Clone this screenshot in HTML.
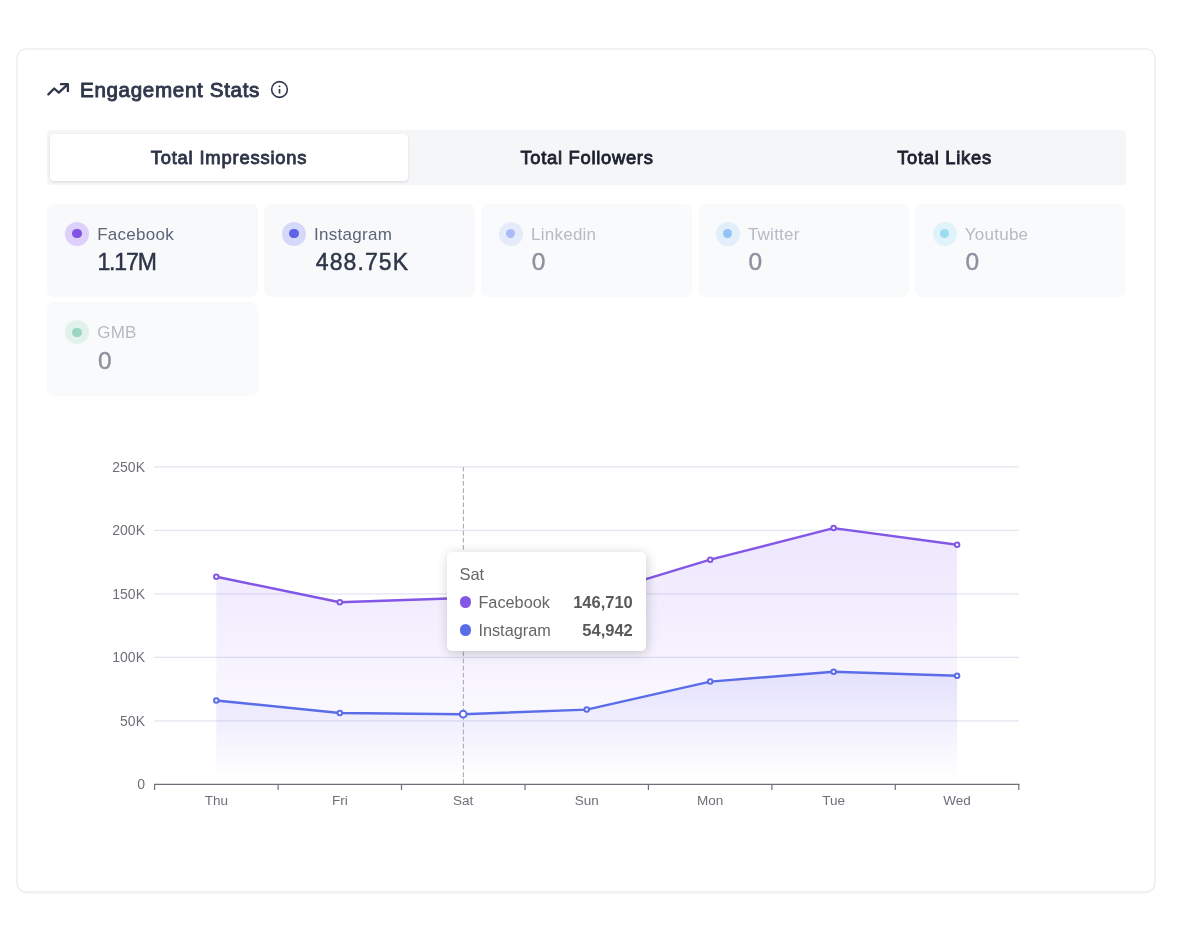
<!DOCTYPE html>
<html lang="en">
<head>
<meta charset="utf-8">
<title>Engagement Stats</title>
<style>
*{box-sizing:border-box;margin:0;padding:0}
html,body{width:1181px;height:945px;background:#fff;overflow:hidden}
body{font-family:"Liberation Sans",Arial,sans-serif;color:#2d3548;position:relative}
.hd{position:absolute;left:47px;top:78px;height:24px;display:flex;align-items:center}
.hd svg.tr{position:absolute;left:0;top:4px}
.hd h2{position:absolute;left:33px;top:-.4px;font-size:20.6px;line-height:24px;font-weight:400;-webkit-text-stroke:.9px #2f374b;color:#2f374b;white-space:nowrap;letter-spacing:.66px}
.hd svg.info{position:absolute;left:222.9px;top:1.75px}
.tabs{position:absolute;left:47px;top:130px;width:1079px;height:55px;background:#f5f6f8;border-radius:4px}
.tab{position:absolute;top:0;height:55px;line-height:56.6px;text-align:center;font-size:18.4px;font-weight:400;-webkit-text-stroke:.85px #1c2130;color:#1c2130;white-space:nowrap;letter-spacing:.7px}
.tab.act{left:3px;top:3.5px;width:358px;height:47.5px;line-height:48.6px;letter-spacing:.8px;-webkit-text-stroke:.85px #2d3548;background:#fff;border-radius:4px;box-shadow:0 1px 3px rgba(16,24,40,.1),0 1px 2px rgba(16,24,40,.04);color:#2d3548}
.st{position:absolute;width:211.4px;height:93.5px;background:#f8f9fb;border-radius:7px}
.st .dot{position:absolute;left:18px;top:18.2px;width:24px;height:24px;border-radius:50%}
.st .dot i{position:absolute;left:7.2px;top:7.2px;width:9.6px;height:9.6px;border-radius:50%}
.st .lb{position:absolute;left:50.3px;top:21px;font-size:17px;line-height:20px;color:#5d6576;white-space:nowrap;letter-spacing:.27px}
.st .vl{position:absolute;left:50.5px;top:44.8px;font-size:23px;line-height:28px;color:#2d3548;-webkit-text-stroke:.45px #2d3548;white-space:nowrap}
.st.off{background:#f9fafc}
.st.off .lb{color:#b5bac4;letter-spacing:.25px}
.st.off .vl{color:#8c929e;-webkit-text-stroke:.4px #8c929e;font-size:24.5px;left:51px}
.tip{position:absolute;left:446.8px;top:552.3px;width:199.4px;height:98.5px;background:#fff;border-radius:5px;box-shadow:1px 2px 12px rgba(0,0,0,.2);font-size:16.5px;color:#666}
.tip .t{position:absolute;left:12.6px;top:11.3px;line-height:20px}
.tip .r{position:absolute;left:13px;right:13.4px;height:20px;line-height:20px}
.tip .r b{position:absolute;right:0;top:0;color:#595959;font-weight:700}
.tip .r i{position:absolute;left:0;top:4.3px;width:11.6px;height:11.6px;border-radius:50%}
.tip .r span{position:absolute;left:18.6px;top:0;font-size:16.3px}
svg text{font-family:"Liberation Sans",Arial,sans-serif}
</style>
</head>
<body>
<div id="root" style="position:absolute;left:0;top:0;width:1181px;height:945px;will-change:transform">
<svg style="position:absolute;left:0;top:0" width="1181" height="945" viewBox="0 0 1181 945">
  <defs><filter id="sh" x="-2%" y="-2%" width="104%" height="104%"><feGaussianBlur stdDeviation="1.2"/></filter></defs>
  <rect x="17" y="49.8" width="1137.9" height="843.2" rx="9" fill="#101828" opacity=".07" filter="url(#sh)"/>
  <rect x="17" y="48.8" width="1137.9" height="843.2" rx="9" fill="#fff" stroke="#e9ebef" stroke-width="1.2"/>
</svg>

<div class="hd">
  <svg class="tr" width="24" height="16" viewBox="0 0 24 16" fill="none" stroke="#2f374b" stroke-width="2.3" stroke-linecap="round" stroke-linejoin="round"><path d="M1.4 12.4 L7.2 6.5 L11.8 10.6 L20.4 2.6"/><path d="M13.9 2.2 H20.9 V9.2"/></svg>
  <h2>Engagement Stats</h2>
  <svg class="info" width="19" height="19" viewBox="0 0 19 19" fill="none"><circle cx="9.5" cy="9.5" r="7.85" stroke="#2f374b" stroke-width="1.6"/><rect x="8.65" y="9" width="1.7" height="4.4" rx=".5" fill="#2f374b"/><circle cx="9.5" cy="6.35" r=".95" fill="#2f374b"/></svg>
</div>

<div class="tabs">
  <div class="tab act">Total Impressions</div>
  <div class="tab" style="left:361px;width:358px">Total Followers</div>
  <div class="tab" style="left:719px;width:357px">Total Likes</div>
</div>

<div class="st" style="left:46.9px;top:203.5px"><div class="dot" style="background:#ddd0fb"><i style="background:#7f52e3"></i></div><div class="lb">Facebook</div><div class="vl" style="letter-spacing:-1.1px">1.17M</div></div>
<div class="st" style="left:263.8px;top:203.5px"><div class="dot" style="background:#d6d8fa"><i style="background:#5d63e4"></i></div><div class="lb">Instagram</div><div class="vl" style="letter-spacing:1.1px;left:52px">488.75K</div></div>
<div class="st off" style="left:480.7px;top:203.5px"><div class="dot" style="background:#e6ebfb"><i style="background:#a9bcf5"></i></div><div class="lb">Linkedin</div><div class="vl">0</div></div>
<div class="st off" style="left:697.6px;top:203.5px"><div class="dot" style="background:#e3eefb"><i style="background:#93c3f4"></i></div><div class="lb">Twitter</div><div class="vl">0</div></div>
<div class="st off" style="left:914.5px;top:203.5px"><div class="dot" style="background:#e0f2fa"><i style="background:#9bdcf3"></i></div><div class="lb">Youtube</div><div class="vl">0</div></div>
<div class="st off" style="left:46.9px;top:302.2px"><div class="dot" style="background:#e1f2ec"><i style="background:#9bd6c0"></i></div><div class="lb">GMB</div><div class="vl">0</div></div>

<svg id="chart" style="position:absolute;left:0;top:440px" width="1181" height="400" viewBox="0 440 1181 400">
  <defs>
    <linearGradient id="gf" gradientUnits="userSpaceOnUse" x1="0" y1="528" x2="0" y2="784"><stop offset="0" stop-color="#8b5cf6" stop-opacity=".15"/><stop offset=".5" stop-color="#8b5cf6" stop-opacity=".08"/><stop offset=".96" stop-color="#8b5cf6" stop-opacity="0"/></linearGradient>
    <linearGradient id="gi" gradientUnits="userSpaceOnUse" x1="0" y1="672" x2="0" y2="784"><stop offset="0" stop-color="#6366f1" stop-opacity=".13"/><stop offset=".97" stop-color="#6366f1" stop-opacity="0"/></linearGradient>
  </defs>
  <g stroke="#e3e5f1" stroke-width="1.2">
    <line x1="154.1" x2="1018.8" y1="720.8" y2="720.8"/>
    <line x1="154.1" x2="1018.8" y1="657.3" y2="657.3"/>
    <line x1="154.1" x2="1018.8" y1="593.9" y2="593.9"/>
    <line x1="154.1" x2="1018.8" y1="530.4" y2="530.4"/>
    <line x1="154.1" x2="1018.8" y1="466.9" y2="466.9"/>
  </g>
  <g font-size="14" fill="#6e7079" text-anchor="end">
    <text x="145" y="789.3">0</text>
    <text x="145" y="725.8">50K</text>
    <text x="145" y="662.3">100K</text>
    <text x="145" y="598.9">150K</text>
    <text x="145" y="535.4">200K</text>
    <text x="145" y="471.9">250K</text>
  </g>
  <path d="M216.3 576.8 L339.8 602.3 L463.2 598.0 L586.7 597.2 L710.2 559.7 L833.6 528.1 L957.1 544.8 V784.3 H216.3 Z" fill="url(#gf)"/>
  <path d="M216.3 700.5 L339.8 713.0 L463.2 714.2 L586.7 709.6 L710.2 681.6 L833.6 671.8 L957.1 675.7 V784.3 H216.3 Z" fill="url(#gi)"/>
  <line x1="463.4" x2="463.4" y1="466.9" y2="784.3" stroke="#adadb4" stroke-width="1.1" stroke-dasharray="4.7 2.4"/>
  <g stroke="#6e7079" stroke-width="1.2">
    <line x1="154.0" x2="1019.4" y1="784.3" y2="784.3"/>
    <line x1="154.6" x2="154.6" y1="784.3" y2="790.0999999999999"/>
    <line x1="278.1" x2="278.1" y1="784.3" y2="790.0999999999999"/>
    <line x1="401.5" x2="401.5" y1="784.3" y2="790.0999999999999"/>
    <line x1="525.0" x2="525.0" y1="784.3" y2="790.0999999999999"/>
    <line x1="648.4" x2="648.4" y1="784.3" y2="790.0999999999999"/>
    <line x1="771.9" x2="771.9" y1="784.3" y2="790.0999999999999"/>
    <line x1="895.3" x2="895.3" y1="784.3" y2="790.0999999999999"/>
    <line x1="1018.8" x2="1018.8" y1="784.3" y2="790.0999999999999"/>
  </g>
  <g font-size="13.5" fill="#6e7079" text-anchor="middle">
    <text x="216.3" y="805.2">Thu</text>
    <text x="339.8" y="805.2">Fri</text>
    <text x="463.2" y="805.2">Sat</text>
    <text x="586.7" y="805.2">Sun</text>
    <text x="710.2" y="805.2">Mon</text>
    <text x="833.6" y="805.2">Tue</text>
    <text x="957.1" y="805.2">Wed</text>
  </g>
  <path d="M216.3 576.8 L339.8 602.3 L463.2 598.0 L586.7 597.2 L710.2 559.7 L833.6 528.1 L957.1 544.8" fill="none" stroke="#8257e6" stroke-width="2.4" stroke-linejoin="round"/>
  <path d="M216.3 700.5 L339.8 713.0 L463.2 714.2 L586.7 709.6 L710.2 681.6 L833.6 671.8 L957.1 675.7" fill="none" stroke="#5b6ce8" stroke-width="2.4" stroke-linejoin="round"/>
  <g fill="#fff" stroke="#8257e6" stroke-width="2">
    <circle cx="216.3" cy="576.8" r="2.25"/><circle cx="339.8" cy="602.3" r="2.25"/><circle cx="463.2" cy="598.0" r="3.4"/><circle cx="586.7" cy="597.2" r="2.25"/><circle cx="710.2" cy="559.7" r="2.25"/><circle cx="833.6" cy="528.1" r="2.25"/><circle cx="957.1" cy="544.8" r="2.25"/>
  </g>
  <g fill="#fff" stroke="#5b6ce8" stroke-width="2">
    <circle cx="216.3" cy="700.5" r="2.25"/><circle cx="339.8" cy="713.0" r="2.25"/><circle cx="463.2" cy="714.2" r="3.4"/><circle cx="586.7" cy="709.6" r="2.25"/><circle cx="710.2" cy="681.6" r="2.25"/><circle cx="833.6" cy="671.8" r="2.25"/><circle cx="957.1" cy="675.7" r="2.25"/>
  </g>
</svg>

<div class="tip">
  <div class="t">Sat</div>
  <div class="r" style="top:39.6px"><i style="background:#8257e6"></i><span>Facebook</span><b>146,710</b></div>
  <div class="r" style="top:67.7px"><i style="background:#5b6ce8"></i><span>Instagram</span><b>54,942</b></div>
</div>
</div>
</body>
</html>
